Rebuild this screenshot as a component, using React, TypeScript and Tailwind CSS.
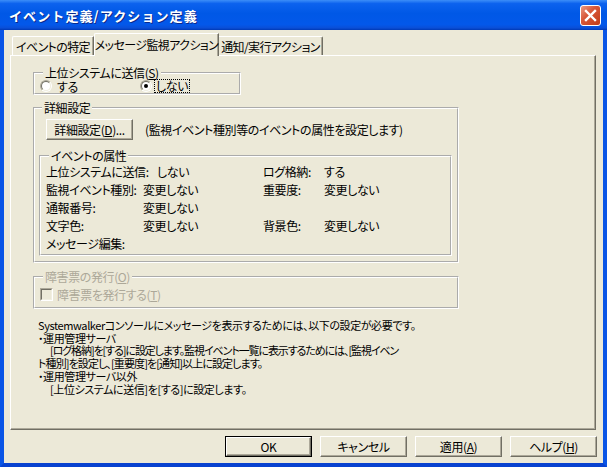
import type { ReactNode } from 'react'

const rows = [
  { label: '上位システムに送信:', value: 'しない', lw: 'w-[111px]', rLabel: 'ログ格納:', rValue: 'する' },
  { label: '監視イベント種別:', value: '変更しない', lw: 'w-[97px]', rLabel: '重要度:', rValue: '変更しない' },
  { label: '通報番号:', value: '変更しない', lw: 'w-[97px]', rLabel: '', rValue: '' },
  { label: '文字色:', value: '変更しない', lw: 'w-[97px]', rLabel: '背景色:', rValue: '変更しない' },
  { label: 'メッセージ編集:', value: '', lw: 'w-[97px]', rLabel: '', rValue: '' },
]

function Radio({ checked }: { checked?: boolean }) {
  return (
    <span className="w-[12px] h-[12px] rounded-full border border-t-[#ACA899] border-l-[#ACA899] border-b-white border-r-white flex shrink-0">
      <span className="flex-1 rounded-full border border-t-[#716F64] border-l-[#716F64] border-b-[#F1EFE2] border-r-[#F1EFE2] bg-white flex items-center justify-center">
        {checked && <span className="w-[4px] h-[4px] rounded-full bg-black" />}
      </span>
    </span>
  )
}

function Check() {
  return (
    <span className="w-[13px] h-[13px] border border-t-[#ACA899] border-l-[#ACA899] border-b-white border-r-white flex shrink-0">
      <span className="flex-1 border border-t-[#716F64] border-l-[#716F64] border-b-[#F1EFE2] border-r-[#F1EFE2] bg-[#ECE9D8]" />
    </span>
  )
}

function Btn({ children, def }: { children: ReactNode; def?: boolean }) {
  const face = (
    <div className="h-full w-full flex items-center justify-center whitespace-nowrap border border-t-white border-l-white border-r-[#716F64] border-b-[#716F64] shadow-[inset_-1px_-1px_0_#ACA899] bg-[#ECE9D8]">
      {children}
    </div>
  )
  return <div className={def ? 'w-[87px] h-[21px] border border-black' : 'w-[87px] h-[21px]'}>{face}</div>
}

export default function App() {
  return (
    <div className="w-[607px] h-[467px] flex flex-col bg-[#ECE9D8] text-black text-[12px] leading-[13px] tracking-[-0.4px] font-['Noto_Sans_CJK_JP',sans-serif] [font-feature-settings:'palt']">
      {/* Title bar */}
      <div className="h-[30px] shrink-0 flex items-center justify-between pl-[9px] pr-[6px] bg-[linear-gradient(to_bottom,#3C8EF8_0%,#0C62EE_12%,#0058E6_45%,#0358EA_82%,#0A4FD8_93%,#0039B5_100%)]">
        <span className="text-white font-bold text-[13px] tracking-[1.1px] [font-feature-settings:normal] [text-shadow:1px_1px_0_#0B2A8C]">
          イベント定義/アクション定義
        </span>
        <div className="w-[21px] h-[21px] rounded-[3px] border border-white flex items-center justify-center bg-[linear-gradient(135deg,#EA9A84_0%,#D8583A_40%,#C23C17_100%)]">
          <svg width="13" height="13" viewBox="0 0 13 13">
            <path d="M2 2 L11 11 M11 2 L2 11" stroke="white" strokeWidth="2.4" strokeLinecap="square" />
          </svg>
        </div>
      </div>

      {/* Body */}
      <div className="flex-1 flex flex-col border-x-4 border-b-4 border-[#0A55E6] border-b-[#0842D0] pl-[6px] pt-[3px]">
        {/* Tabs */}
        <div className="relative z-10 flex items-end h-[22px] pl-[2px] whitespace-nowrap tracking-[-0.6px]">
          <div className="w-[82px] h-[19px] flex items-center justify-center border-t border-l border-white border-r border-r-[#716F64] rounded-tl-[2px] shadow-[inset_-1px_0_0_#ACA899]">
            イベントの特定
          </div>
          <div className="w-[125px] h-[23px] -mb-[1px] pb-[2px] flex items-center justify-center bg-[#ECE9D8] border-t border-l border-white border-r border-r-[#716F64] rounded-tl-[2px] shadow-[inset_-1px_0_0_#ACA899]">
            メッセージ監視アクション
          </div>
          <div className="w-[104px] h-[19px] flex items-center justify-center border-t border-white border-r border-r-[#716F64] rounded-tr-[2px] shadow-[inset_-1px_0_0_#ACA899]">
            通知/実行アクション
          </div>
        </div>

        {/* Panel */}
        <div className="w-[586px] h-[375px] border border-t-white border-l-white border-r-[#716F64] border-b-[#716F64] shadow-[inset_-1px_-1px_0_#ACA899] pl-[22px] pt-[10px]">
          {/* 上位システムに送信 */}
          <fieldset className="w-[208px] border-2 border-white [border-style:groove] pl-[5px]">
            <legend className="ml-[3px] px-[2px]">
              上位システムに送信(<u>S</u>)
            </legend>
            <div className="flex h-[14px] items-center">
              <div className="w-[100px] flex items-center gap-[5px]">
                <Radio />
                <span>する</span>
              </div>
              <div className="flex items-center gap-[2px]">
                <Radio checked />
                <span className="border border-dotted border-black px-[1px] leading-[12px]">しない</span>
              </div>
            </div>
          </fieldset>

          {/* 詳細設定 */}
          <fieldset className="mt-[6px] w-[426px] border-2 border-white [border-style:groove] pl-[4px] pr-[5px] pb-[5px]">
            <legend className="ml-[3px] px-[2px]">詳細設定</legend>
            <div className="flex items-center mt-[5px] ml-[7px]">
              <Btn>
                詳細設定(<u>D</u>)...
              </Btn>
              <span className="ml-[12px]">(監視イベント種別等のイベントの属性を設定します)</span>
            </div>

            <fieldset className="mt-[9px] w-[413px] border-2 border-white [border-style:groove] pl-[5px] pb-[2px]">
              <legend className="ml-[3px] px-[2px]">イベントの属性</legend>
              {rows.map(r => (
                <div key={r.label} className="flex h-[18px] items-center whitespace-nowrap">
                  <div className="w-[217px] flex">
                    <span className={r.lw}>{r.label}</span>
                    <span>{r.value}</span>
                  </div>
                  <span className="w-[61px]">{r.rLabel}</span>
                  <span>{r.rValue}</span>
                </div>
              ))}
            </fieldset>
          </fieldset>

          {/* 障害票の発行 (disabled) */}
          <fieldset className="mt-[7px] w-[426px] border-2 border-white [border-style:groove] pl-[5px] pt-[5px] pb-[6px] text-[#ACA899]">
            <legend className="ml-[3px] px-[2px]">
              障害票の発行(<u>O</u>)
            </legend>
            <div className="flex items-center gap-[4px]">
              <Check />
              <span>
                障害票を発行する(<u>T</u>)
              </span>
            </div>
          </fieldset>

          <div className="mt-[10px] ml-[5px] text-[11px] leading-[12.7px] tracking-[-0.4px] whitespace-nowrap">
            <p>Systemwalkerコンソールにメッセージを表示するためには、以下の設定が必要です。</p>
            <p>・運用管理サーバ</p>
            <p className="pl-[12px] tracking-[-1.1px]">[ログ格納]を[する]に設定します。監視イベント一覧に表示するためには、[監視イベン</p>
            <p className="tracking-[-0.9px]">ト種別]を設定し、[重要度]を[通知]以上に設定します。</p>
            <p>・運用管理サーバ以外</p>
            <p className="pl-[12px]">[上位システムに送信]を[する]に設定します。</p>
          </div>
        </div>

        {/* Buttons */}
        <div className="flex justify-end gap-[8px] pr-[6px] mt-[6px]">
          <Btn def>OK</Btn>
          <Btn>キャンセル</Btn>
          <Btn>
            適用(<u>A</u>)
          </Btn>
          <Btn>
            ヘルプ(<u>H</u>)
          </Btn>
        </div>
      </div>
    </div>
  )
}
